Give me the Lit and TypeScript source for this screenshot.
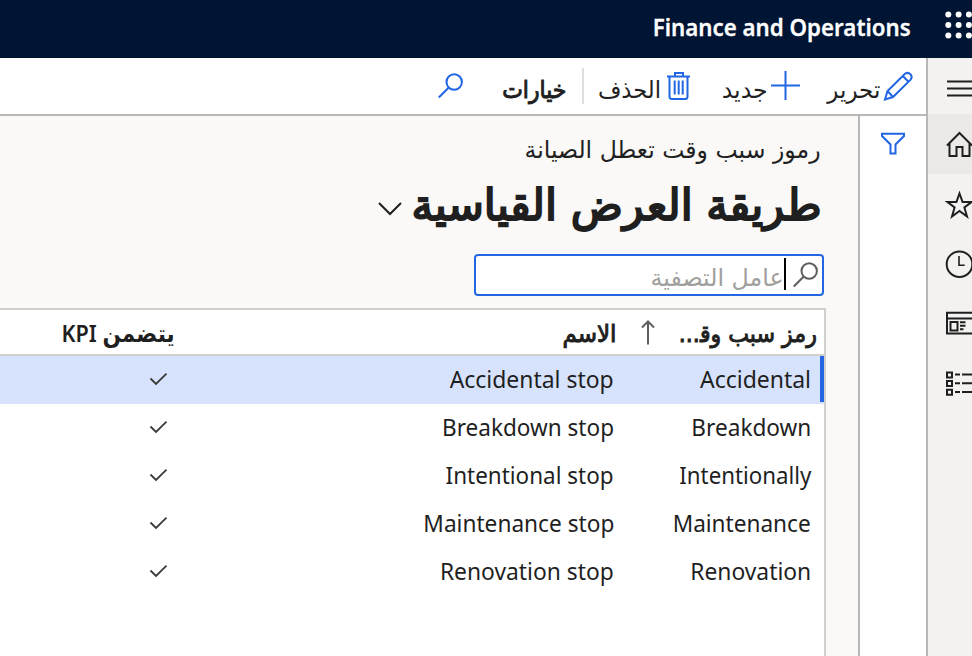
import { LitElement, html, css, svg } from "lit";
import { customElement, property, query } from "lit/decorators.js";

/** A single-line label condensed or widened horizontally to a given width. */
@customElement("fit-label")
class FitLabel extends LitElement {
  static styles = css`
    :host { display: inline-block; flex: none; white-space: nowrap; }
    .box { display: flex; }
    .text { flex: none; display: inline-block; transform-origin: 100% 50%; }
  `;
  @property({ type: Number }) width = 0;
  @property() text = "";
  @query(".text") private label!: HTMLElement;

  render() {
    return html`<div class="box" style="width:${this.width}px"><span class="text">${this.text}</span></div>`;
  }
  updated() {
    const natural = this.label.getBoundingClientRect().width;
    if (natural > 0) this.label.style.transform = `scaleX(${this.width / natural})`;
  }
}

interface Reason { code: string; codeWidth: number; name: string; nameWidth: number; }

const reasons: Reason[] = [
  { code: "Accidental", codeWidth: 111, name: "Accidental stop", nameWidth: 164 },
  { code: "Breakdown", codeWidth: 120, name: "Breakdown stop", nameWidth: 172 },
  { code: "Intentionally", codeWidth: 132, name: "Intentional stop", nameWidth: 168 },
  { code: "Maintenance", codeWidth: 138, name: "Maintenance stop", nameWidth: 191 },
  { code: "Renovation", codeWidth: 121, name: "Renovation stop", nameWidth: 174 },
];

const icon = (cls: string, w: number, h: number, body: unknown) =>
  html`<svg class="icon ${cls}" width=${w} height=${h} viewBox="0 0 ${w} ${h}">${body}</svg>`;

const search = svg`<circle cx="16.2" cy="9" r="7.7"/><path d="M10.8 14.5 .8 24.5"/>`;
const navIcons = [
  { cls: "menu", art: svg`<path d="M1 6.5H29M1 13.5H29M1 20.5H29"/>` },
  { cls: "home active", art: svg`<path d="M1 14.5 13.5 2 26 14.5M3.5 12.5V25H10.5V16H16.5V25H23.5V12.5"/>` },
  { cls: "star", art: svg`<path d="M13.5 2.5 16.6 11H25.5L18.4 16.4 21 25.5 13.5 20 6 25.5 8.6 16.4 1.5 11H10.4Z"/>` },
  { cls: "clock", art: svg`<circle cx="13.5" cy="13.2" r="12.8"/><path class="thin" d="M13 5V14.2H18.7"/>` },
  { cls: "workspace", art: svg`<path d="M1 1.8H30V22.5H1ZM1 7.5H30"/><path d="M4.5 11H11.5V19.5H4.5ZM14 11.3H19.5M14 14.8H19.5M14 18.2H17.5"/>` },
  { cls: "modules", art: svg`<path d="M1 1.5H6V6.5H1ZM1 10H6V15H1ZM1 18.8H6V23.8H1ZM9 3.5H14M16 3.5H30M9 12.3H14M16 12.3H30M9 21H14M16 21H30"/>` },
];

@customElement("app-root")
class AppRoot extends LitElement {
  static styles = css`
    :host { display: flex; flex-direction: column; width: 972px; height: 656px; overflow: hidden; direction: rtl;
      background: #fff; color: #1f1f1f; font: 24px/32px "Noto Sans", "DejaVu Sans", sans-serif; }
    * { box-sizing: border-box; }
    .icon { display: block; flex: none; fill: none; stroke: #1f1f1f; stroke-width: 2; overflow: visible; }
    .blue { stroke: #2266e3; }
    .semi { font-weight: 600; }
    .ar { font-family: "DejaVu Sans", sans-serif; }
    .ar.heavy { font-weight: 400; -webkit-text-stroke: 1px currentColor; }

    .top { height: 58px; flex: none; display: flex; direction: ltr; justify-content: flex-end; background: #001433; color: #fff; }
    .brand { margin: 11px 34px 0 0; direction: rtl; -webkit-text-stroke: .3px currentColor; }
    .waffle { width: 27px; height: 28px; margin-top: 11px; fill: #fff; stroke: none; }

    .body { flex: 1; min-height: 0; display: flex; }
    .nav { width: 46px; flex: none; direction: ltr; border-left: 2px solid #bab8b6; background: #f3f2f1; overflow: hidden; }
    .slot { height: 60px; padding-left: 18px; display: flex; align-items: center; }
    .slot .icon { stroke-width: 2; }
    .slot.menu { height: 56px; padding-top: 5px; }
    .slot.active { background: #ebeae9; }
    .thin { stroke-width: 1.6; }
    .work { flex: 1; min-width: 0; display: flex; flex-direction: column; }

    .bar { height: 58px; flex: none; display: flex; align-items: flex-start; padding: 13px 13px 0 0; border-bottom: 2px solid #bab8b6; background: #fff; }
    .bar fit-label { margin-top: 3px; }
    .edit { margin-left: 3px; }
    .plus { margin: 0 27px 0 3px; }
    .trash { margin: 0 32px 0 6px; }
    .rule { width: 2px; height: 36px; margin: -3px 14px 0 16px; background: #e1dfdd; }
    .find { margin: 2px 39px 0 0; }

    .page { flex: 1; min-height: 0; display: flex; }
    .filters { width: 68px; flex: none; padding: 16px 20px 0 0; border-left: 2px solid #bab8b6; background: #fff; }
    .content { flex: 1; min-width: 0; display: flex; flex-direction: column; background: #faf9f8; }
    .caption { height: 32px; margin: 18px 37px 0 0; }
    .title { height: 60px; display: flex; margin: 9px 37px 0 0; font-size: 43px; line-height: 60px; }
    .title.ar.heavy { -webkit-text-stroke-width: 2px; }
    .chevron { margin: 27px 9px 0 0; }
    .field { width: 350px; height: 42px; flex: none; margin: 19px 34px 0 0; padding-right: 4px; display: flex; border: 2px solid #2266e3; border-radius: 4px; background: #fff; color: #a19f9d; }
    .field .icon { margin-top: 6px; stroke: #605e5c; }
    .caret { width: 2px; height: 32px; margin: 2px 7px 0 0; background: #000; }
    .field fit-label { margin-top: 6px; }

    .grid { flex: 1; margin: 12px 32px 0 0; border: solid #d2d0ce; border-width: 2px 2px 0 0; background: #fff; }
    .head, .row { display: flex; }
    .head { height: 46px; border-bottom: 2px solid #d2d0ce; padding-top: 7px; }
    .row { height: 48px; }
    .row.selected { background: #d7e3fc; }
    .row .cell { padding-top: 7px; }
    .mark { width: 4px; height: 46px; flex: none; }
    .selected .mark { background: #2266e3; }
    .cell { flex: none; display: flex; }
    .code { width: 206px; padding-right: 9px; }
    .name { width: 443px; }
    .head .code { width: 208px; padding-right: 7px; }
    .head .name { width: 441px; }
    .head .ar { margin-top: 1px; }
    .sort { margin: 3px 25px 0 0; stroke: #605e5c; }
    .check { margin: 10px 4px 0 0; stroke: #3b3a39; stroke-width: 1.8; }
  `;

  render() {
    return html`
      <header class="top">
        <fit-label class="brand semi" .width=${258} text="Finance and Operations"></fit-label>
        ${icon("waffle", 27, 28, [0, 1, 2].map((r) => [0, 1, 2].map((c) => svg`<circle cx=${3.3 + c * 10.3} cy=${3.5 + r * 10.5} r="3"/>`)))}
      </header>
      <div class="body">
        <nav class="nav">${navIcons.map((n) => html`<div class="slot ${n.cls}">${icon("", 27, 27, n.art)}</div>`)}</nav>
        <div class="work">
          <div class="bar">
            ${icon("blue edit", 30, 30, svg`<path d="M2 28.5 4.5 20 22 2.8Q24.8.8 27.4 3.2 29.8 6 27.6 8.7L10 26ZM4.5 20 10 26M19.8 5 25.5 10.8"/>`)}
            <fit-label class="ar" .width=${53} text="تحرير"></fit-label>
            ${icon("blue plus", 29, 30, svg`<path d="M14.5 0V29M0 14.5H29"/>`)}
            <fit-label class="ar" .width=${46} text="جديد"></fit-label>
            ${icon("blue trash", 23, 30, svg`<path d="M0 5.5H23M2.5 5.5V25.5Q2.5 28 5 28H18Q20.5 28 20.5 25.5V5.5M8 5V2H16V5M7.7 9.5V23.5M11.7 9.5V23.5M15.7 9.5V23.5"/>`)}
            <fit-label class="ar" .width=${63} text="الحذف"></fit-label>
            <div class="rule"></div>
            <fit-label class="ar heavy" .width=${64} text="خيارات"></fit-label>
            ${icon("blue find", 25, 25, search)}
          </div>
          <div class="page">
            <aside class="filters">${icon("blue", 26, 24, svg`<path d="M2 1.8H24V4L15.5 12.5V21.5H10.5V12.5L2 4Z"/>`)}</aside>
            <main class="content">
              <fit-label class="caption ar" .width=${296} text="رموز سبب وقت تعطل الصيانة"></fit-label>
              <div class="title ar heavy">
                <fit-label .width=${410} text="طريقة العرض القياسية"></fit-label>
                ${icon("chevron", 24, 14, svg`<path d="M1 1 12 12 23 1"/>`)}
              </div>
              <div class="field">
                ${icon("", 25, 25, search)}
                <div class="caret"></div>
                <fit-label class="ar" .width=${133} text="عامل التصفية"></fit-label>
              </div>
              <section class="grid">
                <div class="head semi">
                  <div class="cell code">
                    <fit-label class="ar heavy" .width=${138} text="رمز سبب وق&zwj;..."></fit-label>
                    ${icon("sort", 12, 25, svg`<path d="M6 24.5V1.5M0 7.5 6 1.5 12 7.5"/>`)}
                  </div>
                  <div class="cell name"><fit-label class="ar heavy" .width=${54} text="الاسم"></fit-label></div>
                  <fit-label .width=${113} text="يتضمن KPI"></fit-label>
                </div>
                ${reasons.map((r, i) => html`
                  <div class="row ${i === 0 ? "selected" : ""}">
                    <div class="mark"></div>
                    <div class="cell code"><fit-label .width=${r.codeWidth} text=${r.code}></fit-label></div>
                    <div class="cell name"><fit-label .width=${r.nameWidth} text=${r.name}></fit-label></div>
                    <div class="cell">${icon("check", 17, 12, svg`<path d="M.5 5.5 6 11 16.5.7"/>`)}</div>
                  </div>`)}
              </section>
            </main>
          </div>
        </div>
      </div>`;
  }
}
